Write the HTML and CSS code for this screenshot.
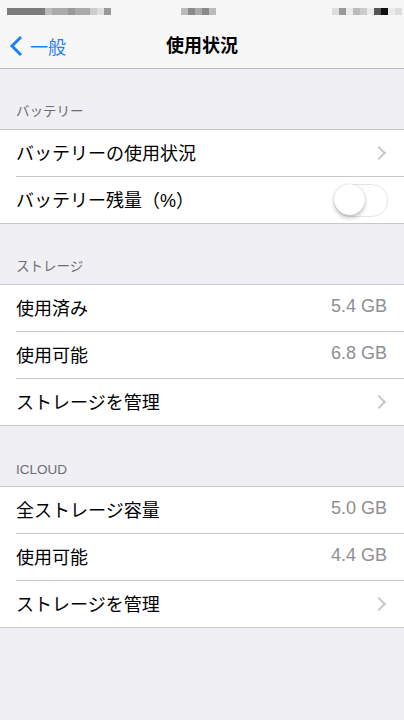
FILE: index.html
```html
<!DOCTYPE html>
<html lang="ja">
<head>
    <meta charset="UTF-8">
    <meta name="viewport" content="width=device-width, initial-scale=1.0">
    <title>使用状況</title>
    <link rel="stylesheet" href="styles.css">
</head>
<body>

    <div class="top">
        <div class="statusbar">
            <div class="mosaic left">
                <span class="px w38 c7"></span><span class="px cb"></span><span class="px w16 ca"></span><span class="px c9"></span><span class="px w15 ca"></span><span class="px cc"></span><span class="px cd"></span><span class="px c9"></span>
            </div>
            <div class="mosaic center">
                <span class="px cb"></span><span class="px c8"></span><span class="px ca"></span><span class="px c8"></span><span class="px cb"></span>
            </div>
            <div class="mosaic right">
                <span class="px cd"></span><span class="px c9"></span><span class="px ce"></span><span class="px cb"></span><span class="px cc"></span><span class="px ce"></span><span class="px c5"></span><span class="px c0"></span><span class="px ce"></span><span class="px cd"></span>
            </div>
        </div>
        <div class="navbar">
            <a href="#" class="back">
                <svg width="14" height="22" viewBox="0 0 14 22"><path d="M12 2 L3 11 L12 20" fill="none" stroke="#1a82fb" stroke-width="3"/></svg>
                <span>一般</span>
            </a>
            <h1>使用状況</h1>
        </div>
    </div>

    <div class="section-header">バッテリー</div>
    <ul class="group">
        <li class="row"><span>バッテリーの使用状況</span><i class="chevron"></i></li>
        <li class="row"><span>バッテリー残量（%）</span><span class="switch"><span class="knob"></span></span></li>
    </ul>

    <div class="section-header">ストレージ</div>
    <ul class="group">
        <li class="row"><span>使用済み</span><span class="value">5.4 GB</span></li>
        <li class="row"><span>使用可能</span><span class="value">6.8 GB</span></li>
        <li class="row"><span>ストレージを管理</span><i class="chevron"></i></li>
    </ul>

    <div class="section-header">ICLOUD</div>
    <ul class="group">
        <li class="row"><span>全ストレージ容量</span><span class="value">5.0 GB</span></li>
        <li class="row"><span>使用可能</span><span class="value">4.4 GB</span></li>
        <li class="row"><span>ストレージを管理</span><i class="chevron"></i></li>
    </ul>

</body>
</html>
```

FILE: styles.css
```css
body { margin: 0; background: #efeff4; font-family: "Liberation Sans", "Noto Sans CJK JP", sans-serif; color: #000; }

.top { background: #f7f7f7; border-bottom: 1px solid #b8b8bc; }
.statusbar { height: 20px; position: relative; }
.mosaic { position: absolute; top: 8px; display: flex; height: 7px; }
.mosaic.left { left: 7px; }
.mosaic.center { left: 181px; }
.mosaic.right { left: 332px; }
.px { width: 7px; height: 7px; }
.w38 { width: 38px; }
.w16 { width: 16px; }
.w15 { width: 15px; }
.c0 { background: #111; }
.c5 { background: #555; }
.c7 { background: #7b7b7b; }
.c8 { background: #8a8a8a; }
.c9 { background: #999; }
.ca { background: #aaa; }
.cb { background: #bbb; }
.cc { background: #ccc; }
.cd { background: #ddd; }
.ce { background: #eaeaea; }

.navbar { height: 48px; display: flex; align-items: center; justify-content: center; position: relative; }
.navbar h1 { margin: 0; font-size: 18px; font-weight: bold; font-family: "Noto Sans CJK JP", sans-serif; }
.back { position: absolute; left: 9px; top: 13px; display: flex; align-items: center; gap: 7px; color: #1a82fb; text-decoration: none; font-size: 18px; font-family: "Noto Sans CJK JP", sans-serif; }
.back svg { display: block; }

.section-header { height: 60px; box-sizing: border-box; padding: 0 16px 9px; display: flex; align-items: flex-end; font-size: 13.5px; color: #6d6d72; font-family: "Liberation Sans", "Noto Sans CJK JP", sans-serif; }

.group { list-style: none; margin: 0; padding: 0 0 0 16px; background: #fff; border-top: 1px solid #c8c7cc; border-bottom: 1px solid #c8c7cc; }
.row { height: 46px; box-sizing: border-box; display: flex; align-items: center; justify-content: space-between; padding: 0 17px 3px 0; font-size: 18px; border-bottom: 1px solid #c8c7cc; }
.row:last-child { border-bottom: none; height: 46px; }
.row:not(:last-child) { height: 47px; }
.value { color: #8e8e93; }

.chevron { width: 8px; height: 8px; border-top: 2px solid #c7c7cc; border-right: 2px solid #c7c7cc; transform: rotate(45deg); margin: 3px 3px 0 0; }

.switch { width: 52px; height: 31px; border-radius: 16px; border: 1.5px solid #e5e5e5; position: relative; margin: 3px -1px 0 0; }
.knob { position: absolute; left: -1px; top: -1px; width: 31px; height: 31px; border-radius: 50%; background: #fff; box-shadow: 0 3px 4px rgba(0, 0, 0, 0.22), 0 0 1px rgba(0, 0, 0, 0.3); }
```
